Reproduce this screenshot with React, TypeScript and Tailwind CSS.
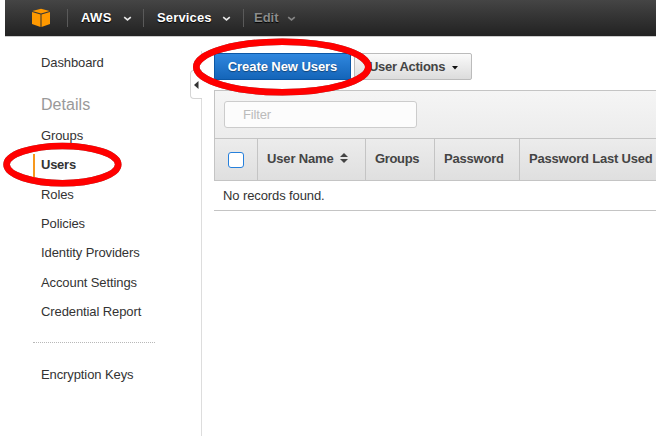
import React from "react";

function Chevron({ color }: { color: string }) {
  return (
    <svg width="9" height="6" viewBox="0 0 9 6" fill="none" className="mt-[2px] block">
      <path d="M1.2 1.2 L4.5 3.8 L7.8 1.2" stroke={color} strokeWidth="1.7" />
    </svg>
  );
}

function TopBar() {
  return (
    <header className="ml-[5px] flex h-9 shrink-0 bg-linear-to-b from-[#454545] to-[#222222] text-[13px] font-bold text-white [text-shadow:0_1px_1px_#000]">
      <div className="flex w-[62px] shrink-0 pt-[8px] pl-[27px]">
        <svg width="18" height="20" viewBox="0 0 18 20">
          <path d="M0 4 L8.5 6.6 V19 L0 16Z" fill="#f90" />
          <path d="M18 4 L9.5 6.6 V19 L18 16Z" fill="#f90" />
          <path d="M0.3 3.1 L9 0.7 L17.7 3.1 L9 5.5Z" fill="#f90" />
        </svg>
      </div>
      <div className="mt-[9px] h-[18px] w-px bg-[#5a5a5a]" />
      <div className="flex w-[75px] items-center pl-[13px]">
        <span className="w-[42px] tracking-[0.4px]">AWS</span>
        <Chevron color="#e8e8e8" />
      </div>
      <div className="mt-[9px] h-[18px] w-px bg-[#5a5a5a]" />
      <div className="flex w-[99px] items-center pl-[13px]">
        <span className="w-[65px] tracking-[0.15px]">Services</span>
        <Chevron color="#e8e8e8" />
      </div>
      <div className="mt-[9px] h-[18px] w-px bg-[#5a5a5a]" />
      <div className="flex items-center pl-[10px] text-[#8c8c8c]">
        <span className="w-[33px]">Edit</span>
        <Chevron color="#858585" />
      </div>
    </header>
  );
}

const links = ["Groups", "Users", "Roles", "Policies", "Identity Providers", "Account Settings", "Credential Report"];

function Sidebar() {
  return (
    <nav className="flex w-[190px] shrink-0 flex-col pl-[33px] tracking-[-0.1px] text-[#333]">
      <a className="mt-[16px] h-5 pl-[8px] leading-5">Dashboard</a>
      <h2 className="mt-[20px] h-6 pl-[8px] text-[16px] leading-6 tracking-[0.05px] text-[#999]">Details</h2>
      <ul className="mt-[4.3px] h-[205.7px]">
        {links.map((name) => (
          <li key={name} className="flex h-[29.3px] items-center">
            {name === "Users" ? (
              <a className="flex h-[23px] items-center border-l-2 border-[#f7981d] pl-[6px] font-bold tracking-[-0.25px]">{name}</a>
            ) : (
              <a className="pl-[8px]">{name}</a>
            )}
          </li>
        ))}
      </ul>
      <div className="mt-[15px] w-[122px] border-t border-dotted border-[#b8b8b8]" />
      <a className="mt-[22px] h-5 pl-[8px] leading-5">Encryption Keys</a>
    </nav>
  );
}

function Divider() {
  return (
    <div className="flex w-3 shrink-0 flex-col">
      <div className="mt-[14px] ml-[11px] h-[4px] w-px bg-[#ddd]" />
      <div className="mt-[15px] flex h-[29px] items-center justify-center rounded-l-[4px] border border-r-0 border-[#d5d5d5] bg-white">
        <svg width="5" height="8" viewBox="0 0 5 8"><path d="M4.5 0 V8 L0 4Z" fill="#333" /></svg>
      </div>
      <div className="ml-[11px] flex-1 bg-[#ddd]" />
    </div>
  );
}

function Main() {
  return (
    <main className="ml-3 flex min-w-0 flex-1 flex-col">
      <div className="mt-[16px] flex gap-[3px] font-bold">
        <button className="h-[27px] w-[137px] shrink-0 rounded-[2px] border border-[#0c57a5] bg-linear-to-b from-[#2f87de] to-[#1465b9] text-white [text-shadow:0_1px_1px_#0006]">
          <span className="tracking-[-0.07px] whitespace-nowrap">Create New Users</span>
        </button>
        <button className="flex h-[27px] w-[118px] shrink-0 items-center rounded-[2px] border border-[#bbb] bg-linear-to-b from-[#fafafa] to-[#dcdcdc] pl-[14px]">
          <span className="w-[83px] text-left tracking-[-0.3px] whitespace-nowrap">User Actions</span>
          <svg width="6" height="4" viewBox="0 0 6 4" className="mt-[2px]"><path d="M0 0 H6 L3 3.5Z" fill="#111" /></svg>
        </button>
      </div>
      <section className="mt-[10px] border-t border-l border-[#c4c4c4]">
        <div className="h-[47px] bg-linear-to-b from-[#f5f5f5] to-[#ececec] pt-[10px] pl-[9px]">
          <div className="flex h-[27px] w-[193px] items-center rounded-[3px] border border-[#ccc] bg-[#fcfcfc] pl-[18px] tracking-[-0.15px] text-[#bbb]">Filter</div>
        </div>
        <div className="flex h-[43px] overflow-hidden border-y border-[#c4c4c4] bg-linear-to-b from-[#ececec] to-[#dfdfdf] font-bold whitespace-nowrap">
          <div className="w-[43px] shrink-0 border-r border-[#c4c4c4] pt-[13px] pl-[13px]">
            <div className="size-4 rounded-[3px] border border-[#2680dc] bg-white" />
          </div>
          <div className="flex w-[108px] shrink-0 border-r border-[#c4c4c4] pt-[10px] pl-[9px] leading-5">
            <span className="w-[73px] tracking-[-0.15px]">User Name</span>
            <svg width="8" height="10" viewBox="0 0 8 10" className="mt-[4px]"><path d="M0 4 L4 0 L8 4Z M0 6 H8 L4 10Z" fill="#444" /></svg>
          </div>
          <div className="w-[69px] shrink-0 border-r border-[#c4c4c4] pt-[10px] pl-[9px] leading-5 tracking-[-0.35px]">Groups</div>
          <div className="w-[85px] shrink-0 border-r border-[#c4c4c4] pt-[10px] pl-[9px] leading-5 tracking-[-0.2px]">Password</div>
          <div className="shrink-0 pt-[10px] pl-[9px] leading-5 tracking-[-0.2px]">Password Last Used</div>
        </div>
      </section>
      <div className="h-[30px] border-b border-[#c4c4c4] pl-[9px] leading-[29px] tracking-[-0.1px] text-[#333]">No records found.</div>
    </main>
  );
}

export default function App() {
  return (
    <div className="relative flex h-[436px] w-[656px] flex-col overflow-hidden bg-white font-['Liberation_Sans',Arial,sans-serif] text-[13px] text-[#444]">
      <TopBar />
      <div className="ml-[5px] h-px shrink-0 bg-[#ccc]" />
      <div className="flex min-h-0 flex-1">
        <Sidebar />
        <Divider />
        <Main />
      </div>
      <svg width="656" height="436" className="pointer-events-none absolute inset-0 drop-shadow-[0_0.5px_0.5px_#0008]" fill="none" stroke="#f00" strokeWidth="6.6">
        <ellipse cx="282.3" cy="67" rx="86" ry="25.2" />
        <ellipse cx="62.4" cy="164.6" rx="55.8" ry="18.6" />
      </svg>
    </div>
  );
}
